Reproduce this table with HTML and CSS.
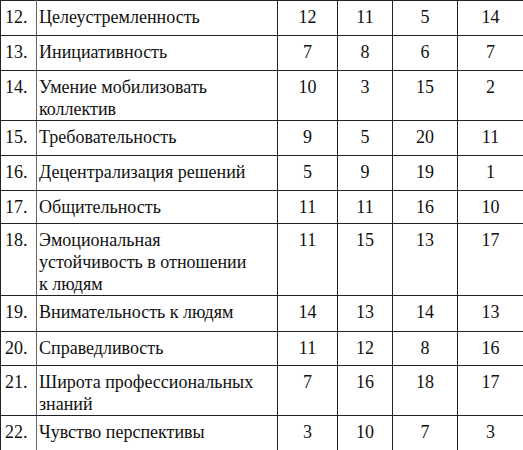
FILE: index.html
```html
<!DOCTYPE html>
<html lang="ru">
<head>
<meta charset="utf-8">
<title>Таблица качеств</title>
<link rel="stylesheet" href="styles.css">
</head>
<body>
<table class="grid">
  <colgroup>
    <col class="c-num"><col class="c-name"><col class="c-a"><col class="c-b"><col class="c-c"><col class="c-d">
  </colgroup>
  <tbody>
    <tr class="r35"><td class="num">12.</td><td class="name">Целеустремленность</td><td>12</td><td>11</td><td>5</td><td>14</td></tr>
    <tr class="r35"><td class="num">13.</td><td class="name">Инициативность</td><td>7</td><td>8</td><td>6</td><td>7</td></tr>
    <tr class="r50"><td class="num">14.</td><td class="name">Умение мобилизовать<br>коллектив</td><td>10</td><td>3</td><td>15</td><td>2</td></tr>
    <tr class="r35"><td class="num">15.</td><td class="name">Требовательность</td><td>9</td><td>5</td><td>20</td><td>11</td></tr>
    <tr class="r35"><td class="num">16.</td><td class="name">Децентрализация решений</td><td>5</td><td>9</td><td>19</td><td>1</td></tr>
    <tr class="r33"><td class="num">17.</td><td class="name">Общительность</td><td>11</td><td>11</td><td>16</td><td>10</td></tr>
    <tr class="r72"><td class="num">18.</td><td class="name">Эмоциональная<br>устойчивость в отношении<br>к людям</td><td>11</td><td>15</td><td>13</td><td>17</td></tr>
    <tr class="r36"><td class="num">19.</td><td class="name">Внимательность к людям</td><td>14</td><td>13</td><td>14</td><td>13</td></tr>
    <tr class="r34"><td class="num">20.</td><td class="name">Справедливость</td><td>11</td><td>12</td><td>8</td><td>16</td></tr>
    <tr class="r50 soft-top"><td class="num">21.</td><td class="name">Широта профессиональных<br>знаний</td><td>7</td><td>16</td><td>18</td><td>17</td></tr>
    <tr class="r35"><td class="num">22.</td><td class="name">Чувство перспективы</td><td>3</td><td>10</td><td>7</td><td>3</td></tr>
  </tbody>
</table>
</body>
</html>
```

FILE: styles.css
```css
html, body {
  margin: 0;
  padding: 0;
  background: #ffffff;
}

.grid {
  border-collapse: collapse;
  table-layout: fixed;
  width: 523px;
  color: #111111;
  font-family: "Liberation Serif", "Times New Roman", serif;
  font-size: 18px;
  line-height: 22px;
}

.c-num { width: 36px; }
.c-name { width: 241px; }
.c-a { width: 60px; }
.c-b { width: 55px; }
.c-c { width: 65px; }
.c-d { width: 66px; }

.grid td {
  font-family: "Liberation Serif", "Times New Roman", serif;
  border: 1.5px solid #222222;
  padding: 5px 0 0 0;
  vertical-align: top;
  text-align: center;
  white-space: nowrap;
}

.grid td.num {
  text-align: left;
  padding-left: 4px;
  border-right-color: #666666;
}

.grid td.name {
  text-align: left;
  padding-left: 2px;
  padding-right: 2px;
}

.soft-top td {
  border-top-color: #777777;
}

.r33 { height: 33px; }
.r34 { height: 34px; }
.r35 { height: 35px; }
.r36 { height: 36px; }
.r50 { height: 50px; }
.r72 { height: 72px; }
```
